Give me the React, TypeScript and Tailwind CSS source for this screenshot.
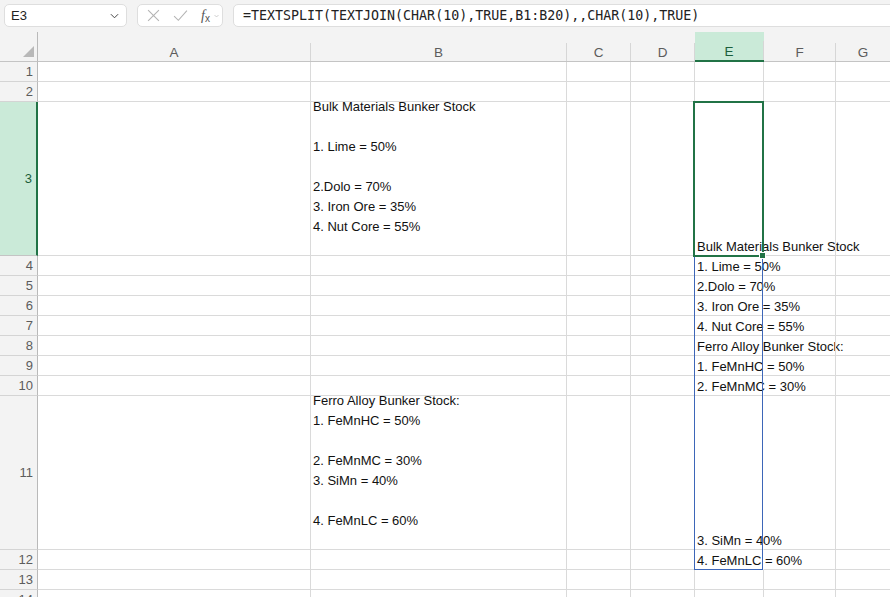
import React from "react";

const FONT = "font-['Liberation_Sans',Arial,sans-serif]";

type Col = { k: string; w: string };
const COLS: Col[] = [
  { k: "A", w: "w-[273px]" },
  { k: "B", w: "w-[256px]" },
  { k: "C", w: "w-[64px]" },
  { k: "D", w: "w-[64px]" },
  { k: "E", w: "w-[69px]" },
  { k: "F", w: "w-[72px]" },
  { k: "G", w: "w-[60px]" },
];

type RowDef = { n: number; h: string; b?: string[]; e?: string };

const ROWS: RowDef[] = [
  { n: 1, h: "h-[20px]" },
  { n: 2, h: "h-[20px]" },
  {
    n: 3,
    h: "h-[154px]",
    b: [
      "Bulk Materials Bunker Stock",
      "",
      "1. Lime = 50%",
      "",
      "2.Dolo = 70%",
      "3. Iron Ore = 35%",
      "4. Nut Core = 55%",
    ],
    e: "Bulk Materials Bunker Stock",
  },
  { n: 4, h: "h-[20px]", e: "1. Lime = 50%" },
  { n: 5, h: "h-[20px]", e: "2.Dolo = 70%" },
  { n: 6, h: "h-[20px]", e: "3. Iron Ore = 35%" },
  { n: 7, h: "h-[20px]", e: "4. Nut Core = 55%" },
  { n: 8, h: "h-[20px]", e: "Ferro Alloy Bunker Stock:" },
  { n: 9, h: "h-[20px]", e: "1. FeMnHC = 50%" },
  { n: 10, h: "h-[20px]", e: "2. FeMnMC = 30%" },
  {
    n: 11,
    h: "h-[154px]",
    b: [
      "Ferro Alloy Bunker Stock:",
      "1. FeMnHC = 50%",
      "",
      "2. FeMnMC = 30%",
      "3. SiMn = 40%",
      "",
      "4. FeMnLC = 60%",
    ],
    e: "3. SiMn = 40%",
  },
  { n: 12, h: "h-[20px]", e: "4. FeMnLC = 60%" },
  { n: 13, h: "h-[20px]" },
  { n: 14, h: "h-[20px]" },
];

function Chevron({ className }: { className?: string }) {
  return (
    <svg viewBox="0 0 10 6" className={className} fill="none" stroke="currentColor" strokeWidth="1.1">
      <path d="M1 1 L5 5 L9 1" />
    </svg>
  );
}

function Toolbar() {
  return (
    <div className="h-[32px] bg-[#f3f3f3] flex items-start pt-[4px] pl-[4px] gap-[10px] overflow-hidden">
      <div className="w-[123px] shrink-0 h-[23px] bg-white border border-[#dedede] rounded-[5px] flex items-center justify-between pl-[6px] pr-[7px]">
        <span className="text-[13px] text-[#222]">E3</span>
        <Chevron className="w-[9px] h-[6px] text-[#444]" />
      </div>
      <div className="w-[86px] shrink-0 h-[23px] bg-white border border-[#dedede] rounded-[5px] flex items-center pl-[9px] gap-[13px]">
        <svg viewBox="0 0 12 12" className="w-[13px] h-[13px] text-[#b4b4b4]" fill="none" stroke="currentColor" strokeWidth="1">
          <path d="M1 1 L11 11 M11 1 L1 11" />
        </svg>
        <svg viewBox="0 0 14 12" className="w-[15px] h-[13px] text-[#b4b4b4]" fill="none" stroke="currentColor" strokeWidth="1">
          <path d="M1 6.5 L5 10.5 L13 1.5" />
        </svg>
        <div className="flex items-center gap-[4px]">
          <span className="font-['Liberation_Serif',serif] italic text-[14px] text-[#555] leading-none">
            f<span className="text-[10px] not-italic font-['Liberation_Sans',sans-serif] relative top-[2px]">x</span>
          </span>
          <Chevron className="w-[5px] h-[4px] text-[#aaa]" />
        </div>
      </div>
      <div className="w-[680px] shrink-0 h-[23px] bg-white border border-[#dedede] rounded-[5px] flex items-center pl-[9px]">
        <span className="font-['DejaVu_Sans_Mono',monospace] text-[13.3px] text-[#222] whitespace-nowrap">
          =TEXTSPLIT(TEXTJOIN(CHAR(10),TRUE,B1:B20),,CHAR(10),TRUE)
        </span>
      </div>
    </div>
  );
}

function HeaderRow() {
  return (
    <div className="flex h-[30px] bg-[#f3f3f3]">
      <div className="w-[38px] shrink-0 border-r border-[#b9b9b9] border-b border-b-[#c4c4c4] flex items-end justify-end pr-[3px] pb-[4px]">
        <svg viewBox="0 0 10 10" className="w-[11px] h-[11px]">
          <path d="M10 0 L10 10 L0 10 Z" fill="#b8b8b8" />
        </svg>
      </div>
      {COLS.map((c) => {
        const sel = c.k === "E";
        return (
          <div
            key={c.k}
            className={`${c.w} ${c.k === "G" ? "flex-1" : "shrink-0"} flex ${
              sel ? "bg-[#caead8] border-b-2 border-[#217346]" : "border-b border-[#c4c4c4]"
            }`}
          >
            <div
              className={`flex-1 flex items-center justify-center pt-[13px] text-[13.5px] ${
                sel ? "text-[#1b5e3b]" : "text-[#5c5c5c]"
              }`}
            >
              {c.k}
            </div>
            {c.k !== "G" && <div className={`w-px ${sel ? "h-[19px]" : "h-[18px]"} self-end bg-[#d6d6d6]`} />}
          </div>
        );
      })}
    </div>
  );
}

function Row({ r }: { r: RowDef }) {
  const sel = r.n === 3;
  return (
    <div className={`flex ${r.h} shrink-0`}>
      <div
        className={`w-[38px] shrink-0 flex items-center justify-end pr-[4px] pt-[1px] text-[13px] border-b ${
          sel
            ? "bg-[#caead8] border-r-2 border-r-[#217346] border-b-[#c4c4c4] text-[#1b5e3b]"
            : "bg-[#f3f3f3] border-r border-r-[#b9b9b9] border-b-[#d4d4d4] text-[#5c5c5c]"
        }`}
      >
        {r.n}
      </div>
      {COLS.map((c) => {
        const isE = c.k === "E";
        const isB = c.k === "B";
        const spill = isE && r.e !== undefined;
        return (
          <div
            key={c.k}
            className={`${c.w} ${c.k === "G" ? "flex-1" : "shrink-0"} border-b border-[#dadada] ${
              c.k === "G" ? "" : "border-r"
            } ${spill ? "border-r-transparent" : "border-r-[#dadada]"} ${
              isB && r.b ? "overflow-hidden flex flex-col justify-end pl-[2px] pb-[18px]" : ""
            } ${spill ? "flex flex-col justify-end pl-[2px] overflow-visible" : ""}`}
          >
            {isB && r.b
              ? r.b.map((l, i) => (
                  <div key={i} className="h-[20px] shrink-0 leading-[20px] text-[13px] text-[#111] whitespace-nowrap">
                    {l}
                  </div>
                ))
              : null}
            {spill ? (
              <div className="h-[19px] shrink-0 leading-[21px] text-[13px] text-[#111] whitespace-nowrap">{r.e}</div>
            ) : null}
          </div>
        );
      })}
    </div>
  );
}

export default function App() {
  return (
    <div className={`w-[890px] h-[597px] overflow-hidden bg-white relative ${FONT}`}>
      <Toolbar />
      <HeaderRow />
      {ROWS.map((r) => (
        <Row key={r.n} r={r} />
      ))}
      {/* spill range border */}
      <div className="absolute left-[694px] top-[256px] w-[69px] h-[314px] border border-[#3d66b8] pointer-events-none" />
      {/* active cell */}
      <div className="absolute left-[693px] top-[101px] w-[71px] h-[156px] border-2 border-[#217346] pointer-events-none" />
      <div className="absolute left-[759px] top-[252px] w-[7px] h-[7px] bg-[#217346] border border-white" />
    </div>
  );
}
